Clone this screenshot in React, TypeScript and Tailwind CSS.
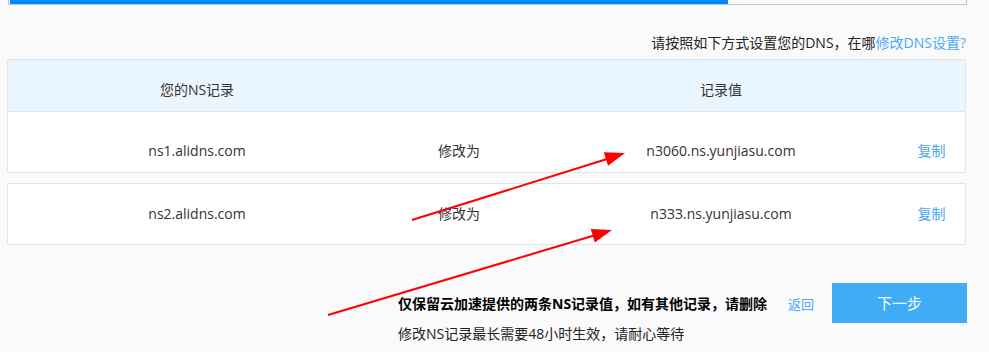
const rows = [
  { from: 'ns1.alidns.com', to: 'n3060.ns.yunjiasu.com' },
  { from: 'ns2.alidns.com', to: 'n333.ns.yunjiasu.com' },
];

function Row({ from, to, className }: { from: string; to: string; className: string }) {
  return (
    <div className={`grid grid-cols-[378px_146px_378px_1fr] text-[14px] text-[#333] ${className}`}>
      <div className="text-center">{from}</div>
      <div className="text-center">修改为</div>
      <div className="text-center">{to}</div>
      <div className="text-center pr-[12px] text-[#4aa6f2] cursor-pointer">复制</div>
    </div>
  );
}

export default function App() {
  return (
    <div
      className="relative w-[989px] h-[352px] overflow-hidden bg-[#fafafa] leading-[20px]"
      style={{ fontFamily: '"Open Sans", "Noto Sans CJK SC", sans-serif' }}
    >
      {/* progress */}
      <div className="ml-[8px] w-[959px] h-[5px] border-x border-b border-[#b8c6d8] bg-[#fafafa]">
        <div className="h-[4px] w-[718px] ml-[1px] bg-[#0088ff]" />
      </div>

      <div className="pl-[7px] pr-[23px]">
        <p className="mt-[28px] mb-[6px] text-right text-[14px] text-[#222]">
          请按照如下方式设置您的DNS，在哪<span className="text-[#4aa8f8]">修改DNS设置?</span>
        </p>

        {/* table */}
        <div className="border border-[#e4e4e4] bg-white">
          <div className="grid grid-cols-[378px_146px_378px_1fr] h-[52px] items-end pb-[11px] bg-[#eaf6ff] border-b border-[#e4e4e4] text-[14px] text-[#333]">
            <div className="text-center">您的NS记录</div>
            <div />
            <div className="text-center">记录值</div>
            <div />
          </div>
          <Row {...rows[0]} className="h-[60px] items-end pb-[11px]" />
        </div>

        <div className="mt-[10px] border border-[#e4e4e4] bg-white">
          <Row {...rows[1]} className="h-[60px] items-center" />
        </div>

        {/* footer */}
        <div className="mt-[38px] flex items-start">
          <div className="ml-[391px] mt-[6px] leading-[30px] text-[14px] text-[#222]">
            <p className="font-bold text-black">仅保留云加速提供的两条NS记录值，如有其他记录，请删除</p>
            <p>修改NS记录最长需要48小时生效，请耐心等待</p>
          </div>
          <a className="ml-[21px] mt-[11px] text-[13px] text-[#4aa8f8] cursor-pointer">返回</a>
          <button className="ml-auto mr-[-1px] w-[135px] h-[40px] bg-[#40acf6] text-white text-[15px]">下一步</button>
        </div>
      </div>

      {/* annotation arrows */}
      <svg className="absolute inset-0 pointer-events-none" width="989" height="352" viewBox="0 0 989 352">
        <line x1="412" y1="220" x2="607" y2="159" stroke="#ff0000" strokeWidth="2" />
        <polygon points="625,153 608,165.7 603.8,152.3" fill="#ff0000" />
        <line x1="328" y1="315" x2="594" y2="235.5" stroke="#ff0000" strokeWidth="2" />
        <polygon points="612,230 594.8,242.4 590.8,229" fill="#ff0000" />
      </svg>
    </div>
  );
}
